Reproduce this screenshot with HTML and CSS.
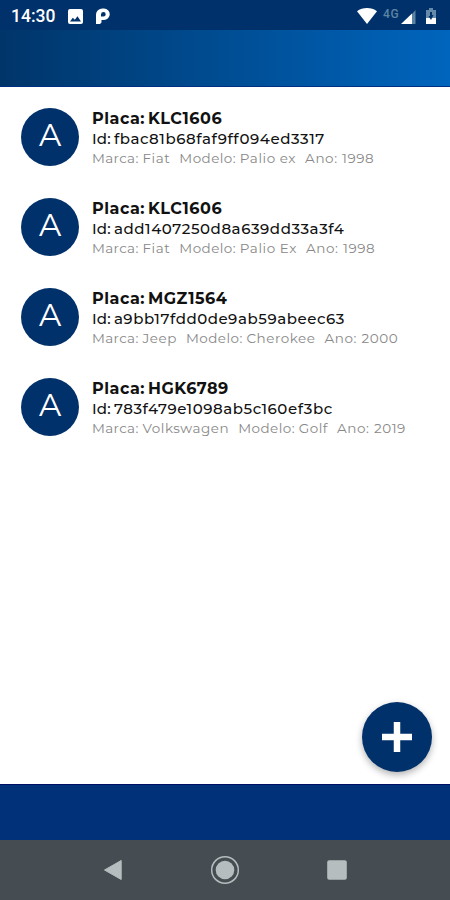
FILE: index.html
```
<!DOCTYPE html>
<html lang="pt-BR">
<head>
<meta charset="utf-8">
<title>Veículos</title>
<link rel="stylesheet" href="styles.css">
</head>
<body>
<div class="screen">
  <div class="status">
    <span class="time">14:30</span>
    <svg class="photo" viewBox="0 0 15 15"><path fill="#fff" fill-rule="evenodd" d="M2 0h11a2 2 0 0 1 2 2v11a2 2 0 0 1-2 2H2a2 2 0 0 1-2-2V2a2 2 0 0 1 2-2zM2 12.5h11L9.5 7.3 6.8 10.8 4.8 8.7z"/></svg>
    <svg class="parking" viewBox="0 0 14 16"><path fill="#fff" fill-rule="evenodd" d="M0 16V6.500A6.500 6 0 0 1 6.500 .5H8A5.700 5.700 0 0 1 8 12H5.500v2.500L4 16zM5 8.500h2.500a2.200 2.200 0 0 0 0-4.400A2.500 2.500 0 0 0 5 6.500z"/></svg>
    <span class="grow"></span>
    <svg class="wifi" viewBox="0 0 20 16"><path fill="#fff" d="M0 3.2C5.5-1 14.500-1 20 3.200L10 16z"/></svg>
    <span class="net">4G</span>
    <svg class="signal" viewBox="0 0 15 14"><path fill="#5d83a3" d="M11 4l3.500-4v14H11z"/><path fill="#fff" d="M0 14L11 3.500V14z"/></svg>
    <svg class="battery" viewBox="0 0 10 16"><path fill="#668baa" d="M3 0h4v2h3v9H0V2h3z"/><path fill="#fff" d="M0 10h10v6H0z"/><path fill="#00316b" d="M4 4h2v3h1.500L5 12 2.500 8H4z"/></svg>
  </div>
  <header class="appbar"></header>
  <main class="list">
    <article class="row"><div class="avatar">A</div><div class="info">
      <p class="plate"><span class="label">Placa:</span><span>KLC1606</span></p>
      <p class="id"><span class="label">Id:</span><span>fbac81b68faf9ff094ed3317</span></p>
      <p class="meta"><span class="brand">Marca:</span><span>Fiat</span><span class="model">Modelo:</span><span>Palio ex</span><span class="year">Ano:</span><span>1998</span></p>
    </div></article>
    <article class="row"><div class="avatar">A</div><div class="info">
      <p class="plate"><span class="label">Placa:</span><span>KLC1606</span></p>
      <p class="id"><span class="label">Id:</span><span>add1407250d8a639dd33a3f4</span></p>
      <p class="meta"><span class="brand">Marca:</span><span>Fiat</span><span class="model">Modelo:</span><span>Palio Ex</span><span class="year">Ano:</span><span>1998</span></p>
    </div></article>
    <article class="row"><div class="avatar">A</div><div class="info">
      <p class="plate"><span class="label">Placa:</span><span>MGZ1564</span></p>
      <p class="id"><span class="label">Id:</span><span>a9bb17fdd0de9ab59abeec63</span></p>
      <p class="meta"><span class="brand">Marca:</span><span>Jeep</span><span class="model">Modelo:</span><span>Cherokee</span><span class="year">Ano:</span><span>2000</span></p>
    </div></article>
    <article class="row"><div class="avatar">A</div><div class="info">
      <p class="plate"><span class="label">Placa:</span><span>HGK6789</span></p>
      <p class="id"><span class="label">Id:</span><span>783f479e1098ab5c160ef3bc</span></p>
      <p class="meta"><span class="brand">Marca:</span><span>Volkswagen</span><span class="model">Modelo:</span><span>Golf</span><span class="year">Ano:</span><span>2019</span></p>
    </div></article>
    <button class="fab" aria-label="Adicionar"><svg viewBox="0 0 30 30"><path fill="none" stroke="#fff" stroke-width="6.500" d="M15 0v30M0 15h30"/></svg></button>
  </main>
  <footer class="bottom"></footer>
  <nav class="nav">
    <svg viewBox="0 0 30 30"><path fill="#b5bdbf" stroke="#b5bdbf" stroke-linejoin="round" d="M6.500 15L23.200 5.500v19z"/></svg>
    <svg viewBox="0 0 30 30"><circle cx="15" cy="15" r="13.300" fill="none" stroke="#b5bdbf" stroke-width="1.500"/><circle cx="15" cy="15" r="9.300" fill="#b5bdbf"/></svg>
    <svg viewBox="0 0 30 30"><rect x="5.200" y="5.200" width="19.600" height="19.600" rx="2" fill="#b5bdbf"/></svg>
  </nav>
</div>
</body>
</html>
```
FILE: styles.css
```
* { box-sizing: border-box; }
body { margin: 0; }
p { margin: 0; }
svg { display: block; flex: none; }
.screen { width: 450px; height: 900px; display: flex; flex-direction: column; background: #fff; font-family: Montserrat, Inter, sans-serif; overflow: hidden; }
.status { height: 30px; flex: none; display: flex; align-items: center; padding: 2px 14px 0 11px; background: #00316b; color: #fff; }
.time { font: 500 17.500px/28px Roboto, sans-serif; width: 57px; }
.photo { width: 15px; height: 15px; }
.parking { width: 14px; height: 16px; margin-left: 13px; }
.grow { flex: 1; }
.wifi { width: 20px; height: 16px; }
.net { font: 500 12px/16px Roboto, sans-serif; letter-spacing: .8px; color: #5d83a3; margin: -5px 0 0 6px; width: 18px; }
.signal { width: 15px; height: 14px; margin-top: 2px; }
.battery { width: 10px; height: 16px; margin-left: 10px; }
.appbar { height: 57px; flex: none; background: linear-gradient(90deg, #003569, #0065bd); border-bottom: 1px solid #002f82; }
.list { flex: 1; position: relative; padding-top: 5px; }
.row { height: 90px; display: flex; align-items: center; padding-left: 21px; gap: 13px; }
.avatar { width: 58px; height: 58px; border-radius: 50%; background: #00316b; color: #fff; font-size: 31px; font-weight: 400; line-height: 55px; text-align: center; }
.info { padding-top: 1px; white-space: nowrap; }
.info p { display: flex; }
.label { flex: none; }
.plate { font-size: 16px; font-weight: 700; line-height: 21px; color: #111; letter-spacing: .5px; }
.plate .label { width: 56px; }
.id { font-size: 15px; font-weight: 500; line-height: 20px; color: #111; letter-spacing: .55px; }
.id .label { width: 22px; letter-spacing: .2px; }
.meta { font-size: 13.500px; line-height: 19px; color: #888; letter-spacing: .55px; }
.brand { width: 50.500px; letter-spacing: .35px; }
.model { width: 60.500px; margin-left: 9px; letter-spacing: .45px; }
.year { width: 37px; margin-left: 9px; letter-spacing: .6px; }
.fab { position: absolute; right: 18px; bottom: 12px; width: 70px; height: 70px; padding: 0; border: 0; border-radius: 50%; background: #00316b; display: grid; place-items: center; box-shadow: 0 3px 7px rgba(0,0,0,.3); }
.fab svg { width: 30px; height: 30px; }
.bottom { height: 56px; flex: none; background: #003179; border-top: 1px solid #000f66; }
.nav { height: 60px; flex: none; display: flex; align-items: center; justify-content: center; gap: 82px; background: #454d52; }
.nav svg { width: 30px; height: 30px; }
```
